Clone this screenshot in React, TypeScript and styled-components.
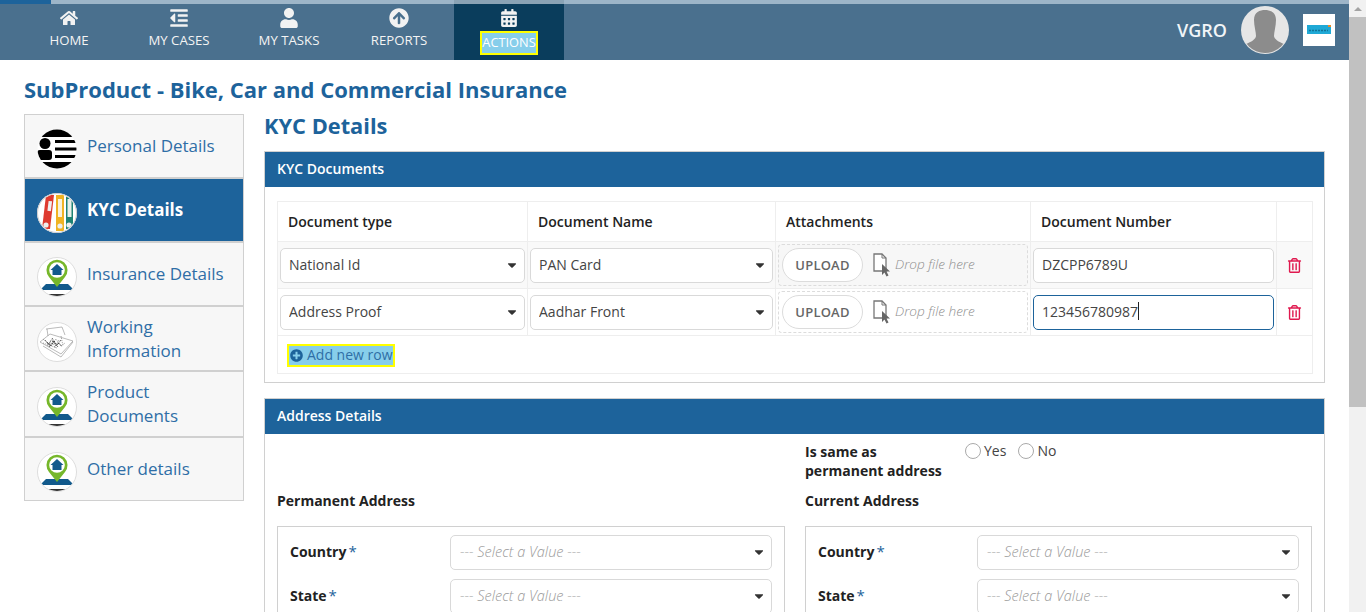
import React from 'react';
import styled, { createGlobalStyle } from 'styled-components';
import { FaHome, FaOutdent, FaUser, FaArrowCircleUp, FaCalendarAlt, FaRegTrashAlt, FaPlusCircle, FaCaretDown } from 'react-icons/fa';

const Global = createGlobalStyle`
  html, body { margin: 0; padding: 0; height: 100%; overflow: hidden; }
  body { font-family: "Open Sans", "Liberation Sans", sans-serif; font-size: 14px; color: #333; background: #fff; }
  * { box-sizing: border-box; }
`;

const BLUE = '#1d639b';

const Shell = styled.div`display: flex; width: 1366px; height: 612px; overflow: hidden;`;
const Page = styled.div`flex: 1; min-width: 0; height: 612px; overflow: hidden;`;

const Scrollbar = styled.div`width: 17px; background: #f1f1f1; display: flex; flex-direction: column; align-items: stretch;`;
const ScrollArrow = styled.div`height: 17px; display: flex; align-items: center; justify-content: center;
  &::before { content: ""; border-left: 4px solid transparent; border-right: 4px solid transparent; border-bottom: 4px solid #a3a3a3; }`;
const ScrollThumb = styled.div`height: 390px; background: #c1c1c1;`;

const Progress = styled.div`height: 4px; background: #9db5c8; display: flex;`;
const ProgressDone = styled.div`width: 51px; background: ${BLUE};`;
const ProgressGap = styled.div`width: 403px;`;
const ProgressOverActive = styled.div`width: 110px; background: #8aa3b5;`;

const TopBar = styled.header`height: 56px; background: #4a708e; display: flex; align-items: stretch; padding-left: 14px; color: #fff;`;
const NavItem = styled.div<{ $active?: boolean }>`
  width: 110px; display: flex; flex-direction: column; align-items: center;
  background: ${p => (p.$active ? '#0a3d5c' : 'transparent')};
  padding-top: 3px;
`;
const NavIcon = styled.div`height: 21px; display: flex; align-items: center; justify-content: center; color: #f2f2f2;`;
const NavLabel = styled.span`margin-top: 4px; font-size: 13.2px; line-height: 17px; color: #f4f4f4;`;
const NavLabelFocused = styled(NavLabel)`
  margin-top: 5px; background: #87ceeb; outline: 2px solid #ffff00; padding: 0; font-size: 12.800px; line-height: 19px; height: 20px; color: #fff;
`;
const Spacer = styled.div`flex: 1;`;
const UserName = styled.span`font-size: 18px; font-weight: 600; color: #f1f5f8; align-self: center; margin-right: 14px; margin-top: -4px;`;
const AvatarBox = styled.div`width: 48px; height: 48px; align-self: center; margin-top: -4px; margin-right: 14px;`;
const LogoBox = styled.div`width: 32px; height: 32px; background: #fff; align-self: center; margin-top: -4px; margin-right: 14px; display: flex; align-items: center; justify-content: center;`;

const Content = styled.main`padding: 0 24px;`;
const Title = styled.h1`margin: 14px 0 0; font-size: 22px; line-height: 30px; font-weight: 700; color: ${BLUE};`;
const Columns = styled.div`display: flex; gap: 20px; margin-top: 10px; align-items: flex-start;`;

const Side = styled.nav`width: 220px; flex: none; border: 1px solid #d0d0d0; background: #f7f7f7;`;
const SideItem = styled.div<{ $active?: boolean; $h: number }>`
  height: ${p => p.$h}px; display: flex; align-items: center; gap: 10px; padding-left: 12px;
  background: ${p => (p.$active ? BLUE : '#f7f7f7')};
  color: ${p => (p.$active ? '#fff' : '#2f6ea6')};
  font-weight: ${p => (p.$active ? 700 : 400)};
  font-size: 17px; line-height: 24px;
  & + & { border-top: 2px solid #d0d0d0; }
`;
const SideIcon = styled.div`width: 40px; height: 40px; flex: none; margin-top: 6px;`;

const MainCol = styled.div`flex: 1; min-width: 0;`;
const Heading = styled.h2`margin: -1px 0 0; font-size: 21.800px; line-height: 26px; font-weight: 700; color: ${BLUE};`;
const Panel = styled.section`border: 1px solid #d0d0d0; margin-top: 12px; & + & { margin-top: 15px; }`;
const PanelHead = styled.div`height: 35px; background: ${BLUE}; color: #fff; font-weight: 600; font-size: 14px; line-height: 34px; padding-left: 12px;`;
const PanelBody = styled.div`padding: 14px 12px 8px;`;

const Table = styled.table`width: 1035px; border-collapse: collapse; table-layout: fixed; font-size: 14px;`;
const Th = styled.th<{ $w: number }>`width: ${p => p.$w}px; height: 40px; border: 1px solid #eee; text-align: left; font-weight: 600; color: #222; padding: 0 10px;`;
const Tr = styled.tr<{ $striped?: boolean }>`background: ${p => (p.$striped ? '#f9f9f9' : '#fff')};`;
const Td = styled.td`height: 47px; border: 1px solid #eee; padding: 0 2px; vertical-align: middle;`;
const TdDelete = styled(Td)`text-align: center; color: #e0194f; font-size: 15px; line-height: 0;`;
const FootTd = styled.td`height: 38px; border: 1px solid #eee; padding: 0 12px;`;

const SelectWrap = styled.div`position: relative; width: 100%;`;
const Select = styled.select<{ $placeholder?: boolean }>`
  appearance: none; display: block; width: 100%; height: 35px; background: #fff; border: 1px solid #d9d9d9; border-radius: 5px;
  padding: 0 24px 2px ${p => (p.$placeholder ? '9px' : '8px')};
  font-family: inherit;
  font-size: ${p => (p.$placeholder ? '14.5px' : '14px')};
  color: ${p => (p.$placeholder ? '#999' : '#444')};
  font-style: ${p => (p.$placeholder ? 'italic' : 'normal')};
  font-weight: ${p => (p.$placeholder ? 300 : 400)};
`;
const Caret = styled(FaCaretDown)`position: absolute; right: 6px; top: 10px; font-size: 14px; color: #333; pointer-events: none;`;

const Dropzone = styled.div<{ $striped?: boolean }>`
  height: 42px; border: 1px dashed #dcdcdc; border-radius: 4px; display: flex; align-items: center; padding-left: 3px;
  background: ${p => (p.$striped ? '#f7f7f7' : '#fff')};
`;
const Upload = styled.div`width: 81px; height: 34px; border: 1px solid #dcdcdc; border-radius: 17px; background: #fff; color: #666; font-weight: 600; font-size: 13px; letter-spacing: 0.2px; display: flex; align-items: center; justify-content: center;`;
const DropIcon = styled.svg`margin-left: 10px; flex: none;`;
const DropText = styled.span`margin-left: 4px; padding-bottom: 3px; font-style: italic; font-weight: 300; font-size: 13.600px; color: #8f8f8f;`;

const TextField = styled.div<{ $focus?: boolean }>`
  height: 35px; border-radius: 5px; background: #fff; padding: 0 8px 2px; display: flex; align-items: center; font-size: 14px; color: #444;
  border: 1px solid ${p => (p.$focus ? BLUE : '#d9d9d9')};
`;
const TextCaret = styled.span`display: inline-block; width: 1px; height: 18px; background: #222; margin-left: 0;`;

const AddRow = styled.span`
  display: inline-flex; align-items: center; gap: 4px; background: #87ceeb; outline: 2px solid #ffff00; color: #2f6ea6;
  font-size: 14px; height: 19px; line-height: 18px; padding: 0 0 0 1px; margin-left: -1px; vertical-align: middle;
`;

const AddressGrid = styled.div`display: grid; grid-template-columns: 508px 507px; column-gap: 20px; padding: 8px 12px 0;`;
const SameRow = styled.div`grid-column: 2; display: flex; height: 49px;`;
const SameLabel = styled.div`width: 160px; font-weight: 700; font-size: 14px; line-height: 19px; color: #222;`;
const Radios = styled.div`display: flex; align-items: flex-start; font-size: 14px; color: #444; line-height: 18px;`;
const Radio = styled.span`width: 16px; height: 16px; border: 1px solid #aaa; border-radius: 50%; background: #fff; margin-right: 3px; margin-top: 1px;`;
const RadioLabel = styled.span`margin-right: 11px; & + span { margin-left: 1px; }`;
const SubHead = styled.div`font-weight: 700; font-size: 14px; line-height: 19px; color: #222; height: 35px;`;
const AddressBox = styled.div`border: 1px solid #d0d0d0; padding: 8px 12px 0; height: 120px;`;
const FieldRow = styled.div<{ $labelW: number }>`display: grid; grid-template-columns: ${p => p.$labelW}px 1fr; align-items: center; margin-bottom: 9px;`;
const FieldLabel = styled.label`font-weight: 700; color: #222; font-size: 14px; padding-bottom: 4px;`;
const Star = styled.span`color: ${BLUE}; font-weight: 400; font-size: 15px; margin-left: 2px;`;

const Avatar = () => (
  <svg width="48" height="48" viewBox="0 0 48 48">
    <circle cx="24" cy="24" r="24" fill="#e6e6e6" />
    <clipPath id="av"><circle cx="24" cy="24" r="23" /></clipPath>
    <g clipPath="url(#av)">
      <path d="M13 14c0-8 6-10 11-10s11 2 11 10c0 6-2 12-2 16 0 3 5 6 10 8v10H5V38c5-2 10-5 10-8 0-4-2-10-2-16z" fill="#8c8c8c" />
    </g>
  </svg>
);

const Logo = () => (
  <svg width="26" height="12" viewBox="0 0 26 12">
    <rect x="1" y="1" width="24" height="9" fill="#1fa9d6" />
    <path d="M3 6.500h19" stroke="#0c5f7f" strokeWidth="1.600" strokeDasharray="2 1" opacity="0.700" />
    <rect x="22" y="1" width="3" height="2" fill="#e58a2c" />
  </svg>
);

const PersonalIcon = () => (
  <svg width="40" height="40" viewBox="0 0 40 40">
    <clipPath id="pc"><circle cx="20" cy="20" r="19.500" /></clipPath>
    <g clipPath="url(#pc)">
      <rect width="40" height="40" fill="#fff" />
      <rect x="0" y="0" width="40" height="8" fill="#000" />
      <rect x="0" y="33" width="40" height="7" fill="#000" />
      <circle cx="8" cy="14.500" r="5.500" fill="#000" />
      <rect x="0" y="21" width="15" height="10" rx="3" fill="#000" />
      <rect x="18" y="11" width="22" height="3" fill="#000" />
      <rect x="18" y="18.500" width="22" height="3" fill="#000" />
      <rect x="18" y="26" width="22" height="3" fill="#000" />
    </g>
  </svg>
);

const KycIcon = () => (
  <svg width="40" height="40" viewBox="0 0 40 40">
    <circle cx="20" cy="20" r="20" fill="#fff" />
    <clipPath id="kc"><circle cx="20" cy="20" r="19" /></clipPath>
    <g clipPath="url(#kc)">
      <path d="M9 2h8l-4 34H5z" fill="#de3a2f" />
      <rect x="19" y="2" width="8" height="36" fill="#f0b323" />
      <rect x="29" y="2" width="7" height="34" fill="#1e8173" />
      <rect x="11" y="8" width="3.500" height="10" fill="#eee" transform="rotate(7 12 13)" />
      <rect x="21" y="6" width="4" height="18" fill="#f8f1dc" />
      <rect x="30.500" y="6" width="4" height="18" fill="#e7efe9" />
      <circle cx="9" cy="32" r="2.600" fill="#eee" />
      <circle cx="23" cy="33" r="2.600" fill="#eee" />
      <circle cx="32" cy="32" r="2.600" fill="#eee" />
    </g>
    <circle cx="20" cy="20" r="19.500" fill="none" stroke="#ccc" />
  </svg>
);

const PinIcon = ({ id }: { id: string }) => (
  <svg width="40" height="40" viewBox="0 0 40 40">
    <circle cx="20" cy="20" r="19.500" fill="#fff" stroke="#ddd" />
    <clipPath id={id}><circle cx="20" cy="20" r="19" /></clipPath>
    <g clipPath={`url(#${id})`}>
      <path d="M3 33l6-6h22l6 6z" fill="#125a8c" />
      <rect x="8" y="37" width="24" height="2" fill="#333" />
    </g>
    <path d="M20 30l-8-10a10.500 10.500 0 1 1 16 0z" fill="#76b72a" />
    <circle cx="20" cy="13" r="7.800" fill="#fff" />
    <path d="M20 7l-6.500 6h2v5h9v-5h2z" fill="#125a8c" />
  </svg>
);

const SketchIcon = () => (
  <svg width="40" height="40" viewBox="0 0 40 40">
    <circle cx="20" cy="20" r="19.500" fill="#fff" stroke="#ddd" />
    <g stroke="#777" strokeWidth="0.500" fill="none">
      <path d="M9 7l16-2 3 8M10 7l1 7M3 20l10-8 23 7-12 13L3 20z" />
      <path d="M6 24l18 11 12-15" />
      <path d="M6 17l8 7 5-7 5 7 4-3M10 24l5-7 3 9 4-8M6 21l14 5M24 14l2 10" stroke="#444" strokeDasharray="1 1" />
      <path d="M10 20l4 4 3-5 2 5 3-3 3 4M8 18l4 5 2-5M15 16l5 7 4-5M12 25l4-6 5 6" stroke="#111" strokeWidth="0.800" strokeDasharray="1 1" />
    </g>
  </svg>
);

const DropFile = () => (
  <DropIcon width="18" height="26" viewBox="0 0 18 26">
    <path d="M1 2h8l4 4v13H1z" fill="#fff" stroke="#777" strokeWidth="1.300" />
    <path d="M9 2v4h4" fill="none" stroke="#777" strokeWidth="1" />
    <path d="M9 12l0 11 2.500-2.500 2 4 2-1-2-4h3.500z" fill="#666" />
  </DropIcon>
);

const DropDown = ({ value, placeholder }: { value: string; placeholder?: boolean }) => (
  <SelectWrap>
    <Select $placeholder={placeholder} defaultValue={value}>
      <option>{value}</option>
    </Select>
    <Caret />
  </SelectWrap>
);

const rows = [
  { type: 'National Id', name: 'PAN Card', num: 'DZCPP6789U', striped: true, focus: false },
  { type: 'Address Proof', name: 'Aadhar Front', num: '123456780987', striped: false, focus: true },
];

const nav = [
  { label: 'HOME', Icon: FaHome, size: 18 },
  { label: 'MY CASES', Icon: FaOutdent, size: 20 },
  { label: 'MY TASKS', Icon: FaUser, size: 20 },
  { label: 'REPORTS', Icon: FaArrowCircleUp, size: 20 },
];

const AddressFields = ({ labelW }: { labelW: number }) => (
  <AddressBox>
    <FieldRow $labelW={labelW}>
      <FieldLabel>Country<Star>*</Star></FieldLabel>
      <DropDown value="--- Select a Value ---" placeholder />
    </FieldRow>
    <FieldRow $labelW={labelW}>
      <FieldLabel>State<Star>*</Star></FieldLabel>
      <DropDown value="--- Select a Value ---" placeholder />
    </FieldRow>
  </AddressBox>
);

export default function App() {
  return (
    <Shell>
      <Global />
      <Page>
        <Progress>
          <ProgressDone />
          <ProgressGap />
          <ProgressOverActive />
        </Progress>
        <TopBar>
          {nav.map(({ label, Icon, size }) => (
            <NavItem key={label}>
              <NavIcon><Icon size={size} /></NavIcon>
              <NavLabel>{label}</NavLabel>
            </NavItem>
          ))}
          <NavItem $active>
            <NavIcon><FaCalendarAlt size={18} /></NavIcon>
            <NavLabelFocused>ACTIONS</NavLabelFocused>
          </NavItem>
          <Spacer />
          <UserName>VGRO</UserName>
          <AvatarBox><Avatar /></AvatarBox>
          <LogoBox><Logo /></LogoBox>
        </TopBar>
        <Content>
          <Title>SubProduct - Bike, Car and Commercial Insurance</Title>
          <Columns>
            <Side>
              <SideItem $h={62}><SideIcon><PersonalIcon /></SideIcon>Personal Details</SideItem>
              <SideItem $h={64} $active><SideIcon><KycIcon /></SideIcon>KYC Details</SideItem>
              <SideItem $h={64}><SideIcon><PinIcon id="p1" /></SideIcon>Insurance Details</SideItem>
              <SideItem $h={65}><SideIcon><SketchIcon /></SideIcon>Working Information</SideItem>
              <SideItem $h={66}><SideIcon><PinIcon id="p2" /></SideIcon>Product Documents</SideItem>
              <SideItem $h={64}><SideIcon><PinIcon id="p3" /></SideIcon>Other details</SideItem>
            </Side>
            <MainCol>
              <Heading>KYC Details</Heading>
              <Panel>
                <PanelHead>KYC Documents</PanelHead>
                <PanelBody>
                  <Table>
                    <thead>
                      <tr>
                        <Th $w={250}>Document type</Th>
                        <Th $w={248}>Document Name</Th>
                        <Th $w={255}>Attachments</Th>
                        <Th $w={246}>Document Number</Th>
                        <Th $w={36} />
                      </tr>
                    </thead>
                    <tbody>
                      {rows.map(r => (
                        <Tr key={r.type} $striped={r.striped}>
                          <Td><DropDown value={r.type} /></Td>
                          <Td><DropDown value={r.name} /></Td>
                          <Td>
                            <Dropzone $striped={r.striped}>
                              <Upload>UPLOAD</Upload>
                              <DropFile />
                              <DropText>Drop file here</DropText>
                            </Dropzone>
                          </Td>
                          <Td>
                            <TextField $focus={r.focus}>{r.num}{r.focus && <TextCaret />}</TextField>
                          </Td>
                          <TdDelete><FaRegTrashAlt /></TdDelete>
                        </Tr>
                      ))}
                      <tr>
                        <FootTd colSpan={5}>
                          <AddRow><FaPlusCircle color={BLUE} size={13} />Add new row</AddRow>
                        </FootTd>
                      </tr>
                    </tbody>
                  </Table>
                </PanelBody>
              </Panel>
              <Panel>
                <PanelHead>Address Details</PanelHead>
                <AddressGrid>
                  <SameRow>
                    <SameLabel>Is same as<br />permanent address</SameLabel>
                    <Radios>
                      <Radio /><RadioLabel>Yes</RadioLabel>
                      <Radio /><RadioLabel>No</RadioLabel>
                    </Radios>
                  </SameRow>
                  <SubHead>Permanent Address</SubHead>
                  <SubHead>Current Address</SubHead>
                  <AddressFields labelW={160} />
                  <AddressFields labelW={159} />
                </AddressGrid>
              </Panel>
            </MainCol>
          </Columns>
        </Content>
      </Page>
      <Scrollbar>
        <ScrollArrow />
        <ScrollThumb />
      </Scrollbar>
    </Shell>
  );
}
